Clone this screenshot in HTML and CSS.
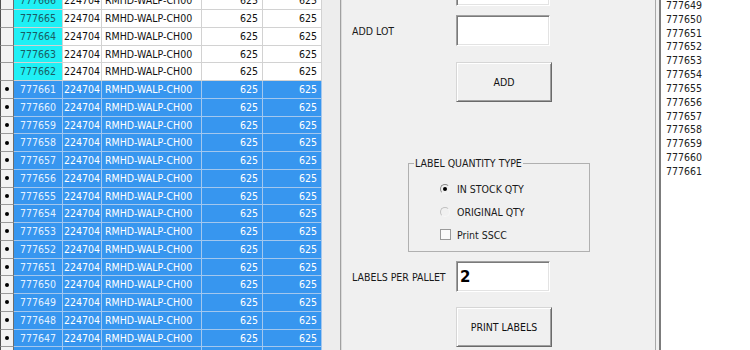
FILE: index.html
```html
<!DOCTYPE html>
<html lang="en">
<head>
    <meta charset="UTF-8">
    <title>Label Printing</title>
    <link rel="stylesheet" href="styles.css">
</head>
<body>

<!-- Lot grid (scrolled) -->
<div class="grid-area">
    <div class="grid" id="grid"></div>
</div>

<!-- Controls -->
<div class="panel">
    <div class="field first">
        <label></label>
        <input type="text" class="box">
    </div>

    <div class="field add-lot">
        <label for="addLot">ADD LOT</label>
        <input type="text" id="addLot" class="box">
    </div>

    <button type="button" class="btn add-btn">ADD</button>

    <fieldset class="qty-type">
        <legend>LABEL QUANTITY TYPE</legend>
        <div class="opts">
            <label class="opt"><input type="radio" name="qty" checked> IN STOCK QTY</label>
            <label class="opt"><input type="radio" name="qty"> ORIGINAL QTY</label>
            <label class="opt"><input type="checkbox"> Print SSCC</label>
        </div>
    </fieldset>

    <div class="field per-pallet">
        <label for="perPallet">LABELS PER PALLET</label>
        <input type="text" id="perPallet" class="box big" value="2">
    </div>

    <button type="button" class="btn print-btn">PRINT LABELS</button>
</div>

<!-- Added lots -->
<div class="lot-list" id="lotList"></div>

<script>
    let grid = document.getElementById("grid");
    for (let lot = 777666; lot >= 777646; lot--) {
        let row = document.createElement("div");
        row.className = lot <= 777661 ? "row sel" : "row";
        row.innerHTML = `<div class="rh"></div><div class="lot">${lot}</div><div class="item">224704</div><div>RMHD-WALP-CH00</div><div class="num">625</div><div class="num">625</div>`;
        grid.appendChild(row);
    }

    let list = document.getElementById("lotList");
    for (let lot = 777649; lot <= 777661; lot++) {
        let item = document.createElement("div");
        item.className = "lot-item";
        item.textContent = lot;
        list.appendChild(item);
    }
</script>

</body>
</html>
```

FILE: styles.css
```css
body {
    margin: 0;
    height: 350px;
    overflow: hidden;
    display: flex;
    background-color: #f0f0f0;
    font-family: "DejaVu Sans Condensed", "DejaVu Sans", sans-serif;
    font-size: 10.5px;
    color: #1a1a1a;
}
input, button {
    font-family: inherit;
    font-size: inherit;
    color: inherit;
}

/* grid */
.grid-area {
    width: 340px;
    flex: none;
    border-right: 1px solid #a0a0a0;
    background-color: #ededed;
    overflow: hidden;
}
.grid {
    margin-top: -7.75px;
    width: 322px;
    font-size: 10.5px;
}
.row {
    display: grid;
    grid-template-columns: 14px 49px 39px 100px 61px 59px;
    height: 17.75px;
}
.row > div {
    background-color: #fff;
    color: #111;
    border-right: 1px solid #d2d2d2;
    border-bottom: 1px solid #d2d2d2;
    line-height: 16.75px;
    padding-left: 3px;
    white-space: nowrap;
    overflow: hidden;
}
.row > .item {
    padding-left: 1px;
}
.row > .num {
    text-align: right;
    padding: 0 4px 0 0;
}
.row > .lot {
    background-color: #1ff0f5;
    color: #1a5c64;
    text-align: center;
    padding: 0;
}
.row > .rh {
    background-color: #f2f2f2;
    border-left: 1px solid #505050;
    border-right: 1px solid #6d6d6d;
    border-bottom: 1px solid #9a9a9a;
    padding: 0;
    display: flex;
    align-items: center;
    justify-content: center;
}
.sel > div {
    background-color: #3796ef;
    color: #fff;
    border-color: #a3c7ee;
}
.sel > .lot {
    background-color: #3796ef;
    color: #e4f1ff;
}
.sel > .rh::after {
    content: "";
    width: 4px;
    height: 4px;
    border-radius: 50%;
    background-color: #000;
}

/* panel */
.panel {
    width: 315px;
    flex: none;
    box-sizing: border-box;
    border-left: 1px solid #dadada;
    border-right: 1px solid #a8a8a8;
    padding-left: 10px;
    display: flex;
    flex-direction: column;
}
.field {
    display: flex;
    align-items: center;
    height: 31px;
}
.field label {
    width: 104px;
}
.box {
    width: 94px;
    height: 31px;
    box-sizing: border-box;
    margin: 0;
    background-color: #fff;
    border: 1px solid;
    border-color: #a0a0a0 #fff #fff #a0a0a0;
    box-shadow: inset 1px 1px 0 #7a7a7a, inset -1px -1px 0 #e3e3e3;
    padding: 0 4px;
    outline: none;
}
.big {
    font-family: "DejaVu Sans", sans-serif;
    font-size: 15px;
    font-weight: bold;
    color: #000;
    padding-left: 3px;
}
.first {
    margin-top: -25px;
}
.add-lot {
    margin-top: 9px;
}
.btn {
    margin: 16px 0 0 104px;
    width: 96px;
    height: 40px;
    padding: 0;
    background-color: #f0f0f0;
    border: 1px solid;
    border-color: #d6d6d6 #6a6a6a #6a6a6a #d6d6d6;
    box-shadow: inset 1px 1px 0 #fff, inset -1px -1px 0 #a0a0a0;
    color: #111;
}
.print-btn {
    margin-top: 15px;
}

/* group box */
.qty-type {
    margin: 55px 0 0 56px;
    width: 182px;
    box-sizing: border-box;
    padding: 0 0 5px 0;
    border: 1px solid #b0b0b0;
    min-width: 0;
}
.qty-type legend {
    margin-left: 5px;
    padding: 0 1px;
    line-height: 12px;
}
.opts {
    padding-top: 8px;
}
.opt {
    display: flex;
    align-items: center;
    height: 23px;
    padding-left: 31px;
}
.opt input {
    appearance: none;
    margin: 0 7px 0 0;
    width: 10px;
    height: 10px;
    box-sizing: border-box;
    border-radius: 50%;
    border: 1px solid;
    border-color: #c0c0c0 #f6f6f6 #f6f6f6 #c0c0c0;
    background-color: #f0f0f0;
    display: flex;
    align-items: center;
    justify-content: center;
}
.opt input:checked {
    border-color: #8a8a8a #f6f6f6 #f6f6f6 #8a8a8a;
}
.opt input[type="radio"]:checked::after {
    content: "";
    width: 4px;
    height: 4px;
    border-radius: 50%;
    background-color: #000;
}
.opt input[type="checkbox"] {
    border-radius: 0;
    width: 11px;
    height: 11px;
    margin-right: 6px;
    border: 1px solid #9a9a9a;
    background-color: #fbfbfb;
}
.per-pallet {
    margin-top: 9px;
}

/* list of added lots */
.lot-list {
    flex: 1;
    margin-left: 3px;
    background-color: #fff;
    border-left: 2px solid #7c7c7c;
    padding-left: 5px;
    font-size: 10.5px;
    color: #222;
}
.lot-item {
    height: 13.83px;
    line-height: 13.83px;
}
.lot-item:first-child {
    margin-top: -1px;
}
```
